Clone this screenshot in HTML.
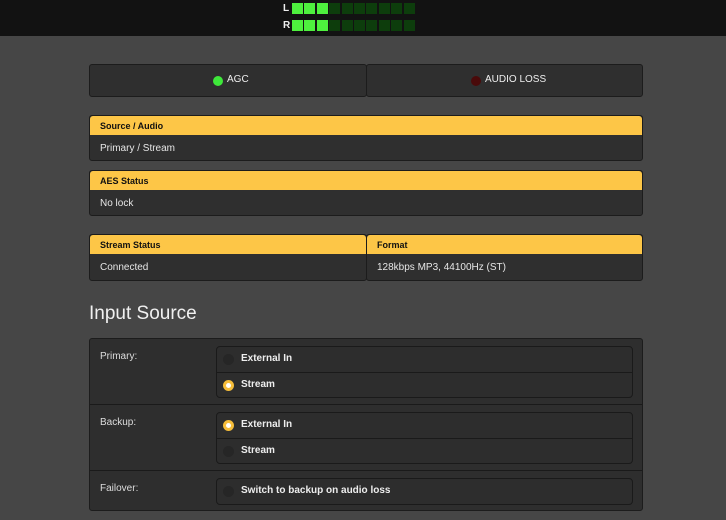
<!DOCTYPE html>
<html><head><style>
*{box-sizing:border-box;margin:0;padding:0}
body{width:726px;height:520px;overflow:hidden;background:#464646;font-family:"Liberation Sans",sans-serif;color:#ddd;font-size:10px;position:relative}
.top{position:absolute;left:0;top:0;width:726px;height:36px;background:#121212}
.lbl{position:absolute;left:283px;font-size:10px;font-weight:bold;color:#eee}
.seg{position:absolute;width:11px;height:11px}
.box{position:absolute;background:#2f2f2f;border:1px solid #1c1c1c;border-radius:3px}
.hd{position:absolute;left:0;right:0;top:0;height:19px;background:#fdc647;color:#111;font-weight:bold;font-size:9px;padding:5px 10px;border-radius:3px 3px 0 0}
.val{position:absolute;left:10px;top:27px;font-size:10px;color:#e6e6e6}
.dot{position:absolute;width:10px;height:10px;border-radius:50%}
.rg{position:absolute;left:126px;right:9px;background:#2d2d2d;border:1px solid #1a1a1a;border-radius:4px}
.opt{height:25px;position:relative;font-weight:bold;font-size:10px;color:#eee;padding:6px 0 0 24px}
.opt+.opt{border-top:1px solid #1a1a1a}
.r{position:absolute;left:6px;top:7px;width:11px;height:11px;border-radius:50%;background:#262626}
.r.on{background:#fff;border:3px solid #f5bd3a}
.rl{position:absolute;left:10px;font-size:10px;color:#ddd}
</style></head><body>
<div class="top">
<div class="lbl" style="top:3px">L</div>
<div class="lbl" style="top:20px">R</div>
<div id="m"></div>
</div>
<script>
var h='';for(var row=0;row<2;row++){for(var i=0;i<10;i++){var c=i<3?'#4ef03e':'#0d3d0c';h+='<div class="seg" style="left:'+(292+i*12.4)+'px;top:'+(3+row*17)+'px;background:'+c+'"></div>';}}
document.getElementById('m').innerHTML=h;
</script>
<div class="box" style="left:89px;top:64px;width:278px;height:33px"><div class="dot" style="left:123px;top:11px;background:#3ee83a"></div><div style="position:absolute;left:137px;top:9px;color:#eee">AGC</div></div>
<div class="box" style="left:366px;top:64px;width:277px;height:33px"><div class="dot" style="left:104px;top:11px;background:#4a0a0a"></div><div style="position:absolute;left:118px;top:9px;color:#eee">AUDIO LOSS</div></div>
<div class="box" style="left:89px;top:115px;width:554px;height:46px"><div class="hd">Source / Audio</div><div class="val">Primary / Stream</div></div>
<div class="box" style="left:89px;top:170px;width:554px;height:46px"><div class="hd">AES Status</div><div class="val">No lock</div></div>
<div class="box" style="left:89px;top:234px;width:278px;height:47px"><div class="hd">Stream Status</div><div class="val">Connected</div></div>
<div class="box" style="left:366px;top:234px;width:277px;height:47px"><div class="hd">Format</div><div class="val">128kbps MP3, 44100Hz (ST)</div></div>
<div style="position:absolute;left:89px;top:303px;font-size:19px;color:#f0f0f0">Input Source</div>
<div class="box" style="left:89px;top:338px;width:554px;height:173px;background:#2e2e2e">
<div style="position:absolute;left:0;right:0;top:65px;border-top:1px solid #1a1a1a"></div>
<div style="position:absolute;left:0;right:0;top:131px;border-top:1px solid #1a1a1a"></div>
<div class="rl" style="top:12px">Primary:</div>
<div class="rg" style="top:7px"><div class="opt"><div class="r"></div>External In</div><div class="opt"><div class="r on"></div>Stream</div></div>
<div class="rl" style="top:78px">Backup:</div>
<div class="rg" style="top:73px"><div class="opt"><div class="r on"></div>External In</div><div class="opt"><div class="r"></div>Stream</div></div>
<div class="rl" style="top:144px">Failover:</div>
<div class="rg" style="top:139px"><div class="opt"><div class="r"></div>Switch to backup on audio loss</div></div>
</div>
</body></html>
